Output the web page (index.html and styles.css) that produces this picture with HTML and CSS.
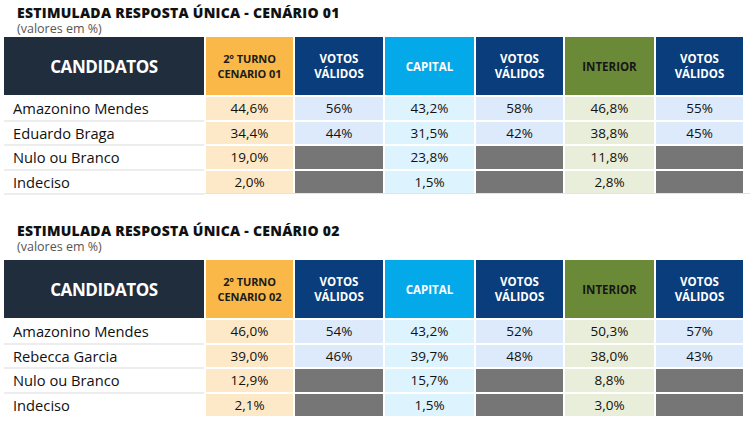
FILE: index.html
```html
<!DOCTYPE html>
<html lang="pt">
<head>
<meta charset="utf-8">
<title>Estimulada resposta única</title>
<link rel="stylesheet" href="styles.css">
</head>
<body>
<div class="page">
  <section class="block first">
    <h2 class="title">ESTIMULADA RESPOSTA ÚNICA - CENÁRIO 01</h2>
    <p class="sub">(valores em %)</p>
    <div class="grid">
      <div class="h cand">CANDIDATOS</div>
      <div class="h turno">2° TURNO<br>CENARIO 01</div>
      <div class="h votos">VOTOS<br>VÁLIDOS</div>
      <div class="h cap">CAPITAL</div>
      <div class="h votos">VOTOS<br>VÁLIDOS</div>
      <div class="h int">INTERIOR</div>
      <div class="h votos">VOTOS<br>VÁLIDOS</div>

      <div class="c name">Amazonino Mendes</div>
      <div class="c lt">44,6%</div>
      <div class="c lv">56%</div>
      <div class="c lc">43,2%</div>
      <div class="c lv">58%</div>
      <div class="c li">46,8%</div>
      <div class="c lv">55%</div>

      <div class="c name">Eduardo Braga</div>
      <div class="c lt">34,4%</div>
      <div class="c lv">44%</div>
      <div class="c lc">31,5%</div>
      <div class="c lv">42%</div>
      <div class="c li">38,8%</div>
      <div class="c lv">45%</div>

      <div class="c name">Nulo ou Branco</div>
      <div class="c lt">19,0%</div>
      <div class="c gr"></div>
      <div class="c lc">23,8%</div>
      <div class="c gr"></div>
      <div class="c li">11,8%</div>
      <div class="c gr"></div>

      <div class="c name">Indeciso</div>
      <div class="c lt">2,0%</div>
      <div class="c gr"></div>
      <div class="c lc">1,5%</div>
      <div class="c gr"></div>
      <div class="c li">2,8%</div>
      <div class="c gr"></div>
    </div>
  </section>

  <section class="block second">
    <h2 class="title">ESTIMULADA RESPOSTA ÚNICA - CENÁRIO 02</h2>
    <p class="sub">(valores em %)</p>
    <div class="grid">
      <div class="h cand">CANDIDATOS</div>
      <div class="h turno">2° TURNO<br>CENARIO 02</div>
      <div class="h votos">VOTOS<br>VÁLIDOS</div>
      <div class="h cap">CAPITAL</div>
      <div class="h votos">VOTOS<br>VÁLIDOS</div>
      <div class="h int">INTERIOR</div>
      <div class="h votos">VOTOS<br>VÁLIDOS</div>

      <div class="c name">Amazonino Mendes</div>
      <div class="c lt">46,0%</div>
      <div class="c lv">54%</div>
      <div class="c lc">43,2%</div>
      <div class="c lv">52%</div>
      <div class="c li">50,3%</div>
      <div class="c lv">57%</div>

      <div class="c name">Rebecca Garcia</div>
      <div class="c lt">39,0%</div>
      <div class="c lv">46%</div>
      <div class="c lc">39,7%</div>
      <div class="c lv">48%</div>
      <div class="c li">38,0%</div>
      <div class="c lv">43%</div>

      <div class="c name">Nulo ou Branco</div>
      <div class="c lt">12,9%</div>
      <div class="c gr"></div>
      <div class="c lc">15,7%</div>
      <div class="c gr"></div>
      <div class="c li">8,8%</div>
      <div class="c gr"></div>

      <div class="c name">Indeciso</div>
      <div class="c lt">2,1%</div>
      <div class="c gr"></div>
      <div class="c lc">1,5%</div>
      <div class="c gr"></div>
      <div class="c li">3,0%</div>
      <div class="c gr"></div>
    </div>
  </section>
</div>
</body>
</html>
```

FILE: styles.css
```css
html, body {
  margin: 0;
  padding: 0;
  background: #ffffff;
}

.page {
  width: 750px;
  font-family: "Open Sans", "Liberation Sans", sans-serif;
  color: #151515;
}

.block {
  margin-left: 4px;
}

.first {
  padding-top: 6px;
}

.second {
  margin-top: 31px;
}

.title {
  margin: 0 0 0 13px;
  font-family: "Open Sans", sans-serif;
  font-weight: 800;
  font-size: 14px;
  line-height: 14px;
  color: #111;
  letter-spacing: 0.25px;
}

.sub {
  margin: 3px 0 0 13px;
  font-size: 12.5px;
  line-height: 12px;
  color: #555;
}

.grid {
  display: grid;
  grid-template-columns: 200px 87px 88px 89px 87px 89px 87px;
  grid-template-rows: 58px repeat(4, 22.5px);
  column-gap: 2px;
  row-gap: 2px;
  margin-top: 2px;
  box-shadow: 1px 1px 0 #e4e4e4;
}

.second .grid {
  margin-top: 7px;
}

.h {
  display: flex;
  align-items: center;
  justify-content: center;
  text-align: center;
  font-weight: 700;
  color: #ffffff;
  font-size: 11.5px;
  line-height: 15px;
}

.cand {
  background: #1f2d3c;
  font-size: 17px;
  letter-spacing: -0.4px;
}

.turno {
  background: #f9b848;
  color: #1b1b1b;
  font-size: 11px;
  letter-spacing: -0.1px;
}

.votos {
  background: #093d7b;
}

.cap {
  background: #04a9ea;
  font-size: 11.5px;
}

.int {
  background: #6b8a37;
  color: #161616;
}

.c {
  display: flex;
  align-items: center;
  justify-content: center;
  font-size: 13.5px;
  color: #111;
}

.name {
  justify-content: flex-start;
  padding-left: 9px;
  font-size: 14.7px;
  box-shadow: 0 2px 0 #ededed;
}

.lt {
  background: #fde9c7;
}

.lv {
  background: #ddeafb;
}

.lc {
  background: #ddf3fd;
}

.li {
  background: #e8eed9;
}

.gr {
  background: #767676;
}
```
